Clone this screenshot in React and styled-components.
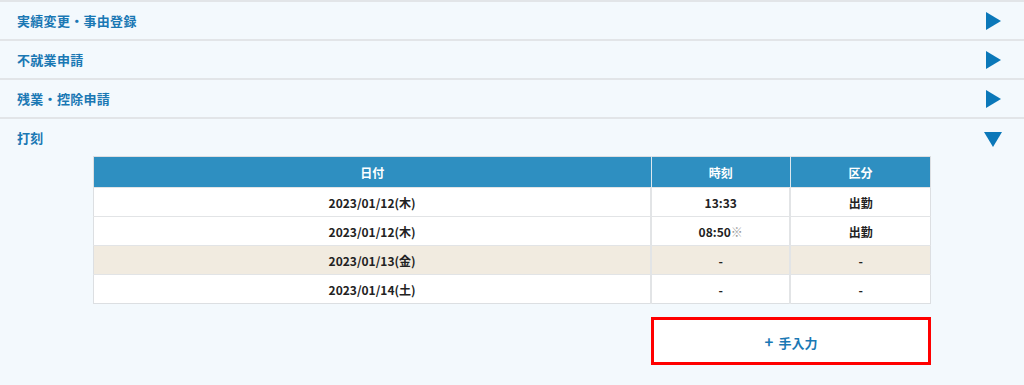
import React from 'react';
import styled, { createGlobalStyle } from 'styled-components';

const GlobalStyle = createGlobalStyle`
  html, body {
    margin: 0;
    padding: 0;
    background: #f3f9fd;
    font-family: "Noto Sans CJK JP", "Noto Sans", sans-serif;
  }
`;

const Page = styled.div`
  width: 1024px;
  height: 385px;
  background: #f3f9fd;
  border-top: 2px solid #e2e5e8;
  box-sizing: border-box;
  overflow: hidden;
`;

const Row = styled.div`
  display: flex;
  align-items: center;
  justify-content: space-between;
  height: ${p => (p.$open ? '37px' : '37px')};
  padding: 0 22px 0 17px;
  border-bottom: ${p => (p.$open ? 'none' : '2px solid #e2e5e8')};
`;

const Title = styled.span`
  font-size: 13px;
  font-weight: 700;
  color: #1a78b4;
  letter-spacing: 0.3px;
`;

const Arrow = ({ open }) => (
  <svg width="18" height="18" viewBox="0 0 18 18">
    {open
      ? <polygon points="0,3 18,3 9,18" fill="#0b78b9" />
      : <polygon points="2,0 17,9 2,18" fill="#0b78b9" />}
  </svg>
);

const Body = styled.div`
  padding-left: 93px;
  width: 838px;
`;

const Table = styled.table`
  width: 838px;
  border-collapse: collapse;
  table-layout: fixed;
  border: 1px solid #dcdfe2;
`;

const Th = styled.th`
  background: #2e8fc1;
  color: #ffffff;
  font-size: 12px;
  font-weight: 700;
  height: 30px;
  padding: 0;
  border-left: 1px solid #dce7ee;
  &:first-child { border-left: none; }
`;

const Tr = styled.tr`
  background: ${p => (p.$holiday ? '#f1ebe0' : '#ffffff')};
`;

const Td = styled.td`
  height: 28px;
  padding: 0;
  text-align: center;
  font-size: 12px;
  font-weight: 700;
  color: #222;
  border-top: 1px solid #e2e4e6;
  border-left: 2px solid #e2e4e6;
  &:first-child { border-left: none; }
`;

const Mark = styled.span`
  color: #9a9a9a;
  font-weight: 400;
`;

const Actions = styled.div`
  display: flex;
  justify-content: flex-end;
  margin-top: 13px;
`;

const AddButton = styled.button`
  width: 280px;
  height: 48px;
  background: #ffffff;
  border: 3px solid #ff0000;
  font-family: inherit;
  font-size: 13px;
  font-weight: 700;
  color: #1a78b4;
  cursor: pointer;
`;

const Plus = styled.span`
  font-size: 15px;
  margin-right: 5px;
`;

const sections = ['実績変更・事由登録', '不就業申請', '残業・控除申請'];

const rows = [
  { date: '2023/01/12(木)', time: '13:33', kind: '出勤' },
  { date: '2023/01/12(木)', time: '08:50', mark: true, kind: '出勤' },
  { date: '2023/01/13(金)', time: '-', kind: '-', holiday: true },
  { date: '2023/01/14(土)', time: '-', kind: '-' },
];

export default function App() {
  return (
    <Page>
      <GlobalStyle />
      {sections.map(s => (
        <Row key={s}>
          <Title>{s}</Title>
          <Arrow />
        </Row>
      ))}
      <Row $open>
        <Title>打刻</Title>
        <Arrow open />
      </Row>
      <Body>
        <Table>
          <colgroup>
            <col style={{ width: '557px' }} />
            <col style={{ width: '139px' }} />
            <col style={{ width: '140px' }} />
          </colgroup>
          <thead>
            <tr>
              <Th>日付</Th>
              <Th>時刻</Th>
              <Th>区分</Th>
            </tr>
          </thead>
          <tbody>
            {rows.map((r, i) => (
              <Tr key={i} $holiday={r.holiday}>
                <Td>{r.date}</Td>
                <Td>{r.time}{r.mark && <Mark>※</Mark>}</Td>
                <Td>{r.kind}</Td>
              </Tr>
            ))}
          </tbody>
        </Table>
        <Actions>
          <AddButton><Plus>+</Plus>手入力</AddButton>
        </Actions>
      </Body>
    </Page>
  );
}
